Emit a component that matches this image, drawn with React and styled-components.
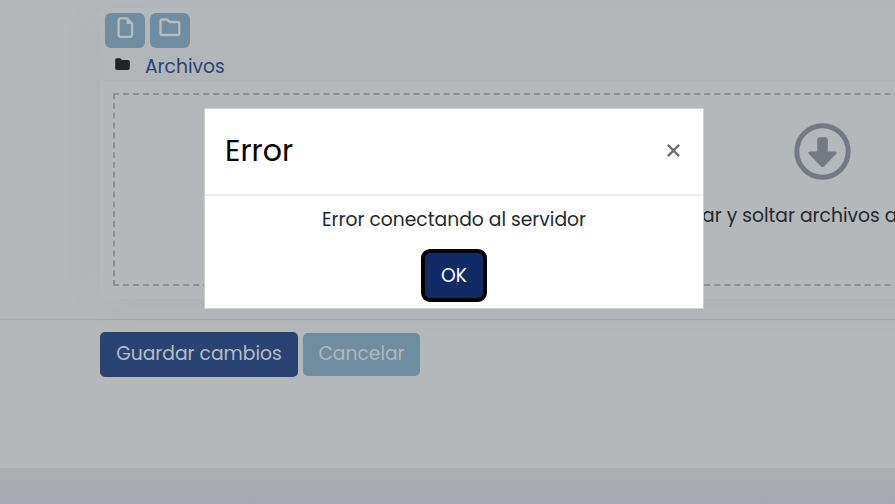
import React from 'react';
import styled, { createGlobalStyle } from 'styled-components';

const GlobalStyle = createGlobalStyle`
  *, *::before, *::after { box-sizing: border-box; }
  body {
    margin: 0;
    overflow: hidden;
    background: #b4b8bb;
    font-family: Poppins, Inter, "Open Sans", sans-serif;
    font-size: 18.72px;
    line-height: 28px;
    color: #25292d;
  }
  button { font: inherit; border: 0; padding: 0; }
`;

const Page = styled.div`
  width: 895px;
  height: 504px;
  overflow: hidden;
  display: flex;
  flex-direction: column;
`;

const Content = styled.main`
  height: 320px;
  flex: none;
  padding: 8px 0 0 100px;
  border-bottom: 1px solid #a2a7ab;
`;

const FileCard = styled.section`
  width: 1446px;
  height: 291px;
  border-radius: 8px;
  background: #b4b8bb;
  box-shadow: 0 0 45px rgba(60, 75, 85, 0.06);
`;

const CardHeader = styled.header`
  height: 73px;
  padding: 5px 5px 0;
  border-radius: 8px 8px 0 0;
  background: linear-gradient(#b4b8bb, #b1b5b8);
`;

const Toolbar = styled.div`
  display: flex;
  gap: 5px;
`;

const ToolButton = styled.button`
  width: 40px;
  height: 35px;
  padding-bottom: 6px;
  border-radius: 6px;
  background: #6f8ca1;
  color: #b7bcbf;
  display: flex;
  align-items: center;
  justify-content: center;
`;

const PathRow = styled.div`
  height: 33px;
  padding: 5px 0 0 10px;
  display: flex;
  align-items: flex-start;
  gap: 15px;
  svg { margin-top: 5px; }
`;

const Text = styled.span`
  white-space: nowrap;
`;

const PathLink = styled(Text)`
  color: #2a4375;
`;

const DropZone = styled.div`
  width: 1419px;
  height: 193px;
  margin: 12px 13px 0;
  padding-top: 28px;
  border: 2px dashed #8c9194;
  display: flex;
  flex-direction: column;
  align-items: center;
  gap: 22px;
`;

const Actions = styled.div`
  height: 148px;
  padding: 12px 0 0 100px;
  display: flex;
  align-items: flex-start;
  gap: 5px;
`;

const SaveButton = styled.button`
  width: 198px;
  height: 45px;
  padding-bottom: 2px;
  border-radius: 5px;
  background: #2a4375;
  color: #b7bdc4;
`;

const CancelButton = styled(SaveButton)`
  width: 117px;
  height: 43px;
  margin-top: 1px;
  background: #6f8ca1;
  color: #b0b7bc;
`;

const Footer = styled.footer`
  flex: 1;
  background: linear-gradient(#a9aeb1, #a8abb4);
`;

const Overlay = styled.div`
  position: fixed;
  inset: 0;
  padding: 108px 0 0 204px;
`;

const Dialog = styled.section`
  width: 500px;
  height: 201px;
  border: 1px solid #cdcfd0;
  background: #fff;
`;

const DialogHeader = styled.header`
  height: 87px;
  padding: 0 22px 2px 20px;
  display: flex;
  align-items: center;
  justify-content: space-between;
  border-bottom: 2px solid #eaeff3;
`;

const DialogTitle = styled.h2`
  margin: 0;
  color: #000;
  font-size: 30px;
  font-weight: 400;
  line-height: 40px;
`;

const CloseButton = styled.button`
  width: 16px;
  height: 16px;
  background: transparent;
  color: #717171;
  display: flex;
`;

const DialogBody = styled.div`
  padding-top: 10px;
  display: flex;
  flex-direction: column;
  align-items: center;
  gap: 19px;
`;

const OkButton = styled.button`
  width: 58px;
  height: 45px;
  border-radius: 5px;
  background: #0f2a65;
  box-shadow: 0 0 0 4px #000;
  color: #fff;
`;

const FileIcon = () => (
  <svg width="18" height="22" viewBox="0 0 18 22" fill="none" stroke="currentColor" strokeWidth="2.3">
    <path d="M4.6 1.3H11.2L16.1 6.4V17.8Q16.1 19.8 14.1 19.8H4.6Q2.6 19.8 2.6 17.8V3.3Q2.6 1.3 4.6 1.3Z" />
    <path d="M10.6 1V7H16.5Z" fill="currentColor" stroke="none" />
  </svg>
);

const FolderIcon = () => (
  <svg width="22" height="19" viewBox="0 0 22 19" fill="none" stroke="currentColor" strokeWidth="2.3" strokeLinejoin="round">
    <path d="M3.2 1.5H7.8L10.8 4H18.6Q20.3 4 20.3 5.7V15.2Q20.3 17 18.6 17H3.2Q1.5 17 1.5 15.2V3.2Q1.5 1.5 3.2 1.5Z" />
  </svg>
);

const SolidFolderIcon = () => (
  <svg width="15" height="13" viewBox="0 0 15 13" fill="#1e2326">
    <path d="M1.8.2H4.6Q5.5.2 6 1L6.8 2H13Q14.8 2 14.8 3.8V10.2Q14.8 12 13 12H2Q.2 12 .2 10.2V2Q.2.2 1.8.2Z" />
  </svg>
);

const DownloadIcon = () => (
  <svg width="57" height="57" viewBox="0 0 57 57" fill="none">
    <circle cx="28.5" cy="28.5" r="25.7" stroke="#737a85" strokeWidth="5" />
    <path d="M25.6 14.2H31.4Q33.8 14.2 33.8 16.6V28.4H41Q43.8 28.8 42 31L30 43.4Q28.5 44.8 27 43.4L15 31Q13.2 28.8 16 28.4H23.2V16.6Q23.2 14.2 25.6 14.2Z" fill="#737a85" />
  </svg>
);

const CloseIcon = () => (
  <svg width="16" height="16" viewBox="0 0 16 16" fill="none" stroke="currentColor" strokeWidth="2.5">
    <path d="M2.9 1.9L14.1 13.1M14.1 1.9L2.9 13.1" />
  </svg>
);

export default function App() {
  return (
    <>
      <GlobalStyle />
      <Page>
        <Content>
          <FileCard>
            <CardHeader>
              <Toolbar>
                <ToolButton aria-label="Crear archivo"><FileIcon /></ToolButton>
                <ToolButton aria-label="Crear carpeta"><FolderIcon /></ToolButton>
              </Toolbar>
              <PathRow>
                <SolidFolderIcon />
                <PathLink>Archivos</PathLink>
              </PathRow>
            </CardHeader>
            <DropZone>
              <DownloadIcon />
              <Text>Puede arrastrar y soltar archivos aquí para añadirlos</Text>
            </DropZone>
          </FileCard>
        </Content>
        <Actions>
          <SaveButton><Text>Guardar cambios</Text></SaveButton>
          <CancelButton><Text>Cancelar</Text></CancelButton>
        </Actions>
        <Footer />
      </Page>
      <Overlay>
        <Dialog role="dialog" aria-label="Error">
          <DialogHeader>
            <DialogTitle>Error</DialogTitle>
            <CloseButton aria-label="Cerrar"><CloseIcon /></CloseButton>
          </DialogHeader>
          <DialogBody>
            <Text>Error conectando al servidor</Text>
            <OkButton>OK</OkButton>
          </DialogBody>
        </Dialog>
      </Overlay>
    </>
  );
}
